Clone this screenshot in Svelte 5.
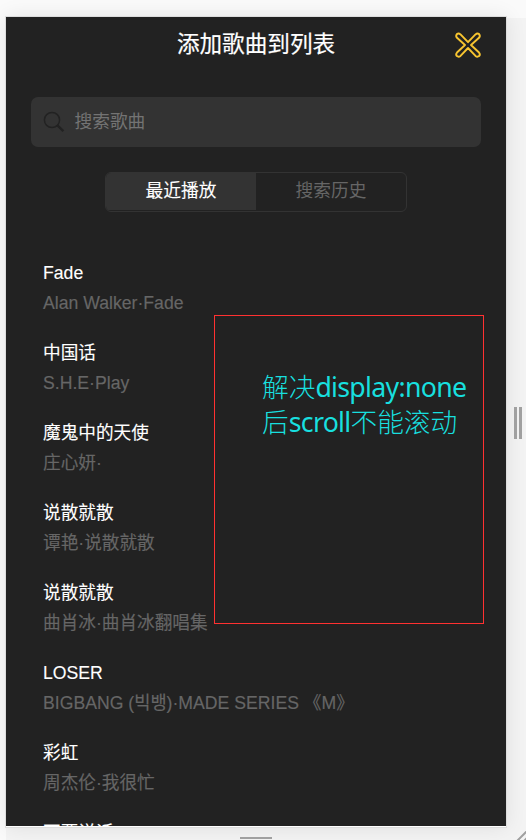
<script>
  const songs = [
    { name: 'Fade', desc: 'Alan Walker·Fade' },
    { name: '中国话', desc: 'S.H.E·Play' },
    { name: '魔鬼中的天使', desc: '庄心妍·' },
    { name: '说散就散', desc: '谭艳·说散就散' },
    { name: '说散就散', desc: '曲肖冰·曲肖冰翻唱集' },
    { name: 'LOSER', desc: 'BIGBANG (빅뱅)·MADE SERIES 《M》' },
    { name: '彩虹', desc: '周杰伦·我很忙' },
    { name: '不要说话' }
  ];
  const tabs = ['最近播放', '搜索历史'];
  let active = $state(0);
</script>

<div class="stage">
  <main class="phone">
    <header>
      <h1>添加歌曲到列表</h1>
      <button class="close" aria-label="close">
        <svg width="28" height="28" viewBox="0 0 28 28">
          <path
            d="M14 11.2 L21.5 3.4 Q23.3 1.9 25.1 3.1 Q26.6 4.9 25 6.8 L17 14 L25 21.5 Q26.6 23.4 25.1 25.1 Q23.3 26.4 21.5 24.9 L14 17 L6.5 24.9 Q4.6 26.4 2.9 25.1 Q1.4 23.4 3 21.5 L11 14 L3 6.8 Q1.4 4.9 2.9 3.1 Q4.6 1.9 6.5 3.4 Z"
          />
        </svg>
      </button>
    </header>

    <div class="search">
      <svg width="22" height="22" viewBox="0 0 22 22">
        <circle cx="9" cy="9" r="7.6" />
        <path d="M14.2 14.2 L20.4 20.2" />
      </svg>
      <span>搜索歌曲</span>
    </div>

    <div class="tabs">
      {#each tabs as tab, i}
        <button class:active={active === i} onclick={() => (active = i)}>{tab}</button>
      {/each}
    </div>

    <ul>
      {#each songs as song}
        <li>
          <h2>{song.name}</h2>
          {#if song.desc}<p>{song.desc}</p>{/if}
        </li>
      {/each}
    </ul>
  </main>

  <div class="note">
    <div><span>解决</span>display:none</div>
    <div><span>后</span>scroll<span>不能滚动</span></div>
  </div>

  <div class="grip-right"></div>
  <div class="grip-bottom"></div>
  <svg class="grip-corner" width="12" height="10" viewBox="0 0 12 10">
    <path d="M1 11 L12 0 M8 11 L13 6" />
  </svg>
</div>

<style>
  :global(body) {
    background: #f3f3f3;
    overflow: hidden;
  }
  .stage {
    position: relative;
    box-sizing: border-box;
    width: 526px;
    height: 840px;
    padding: 17px 20px 13px 6px;
    overflow: hidden;
    background: linear-gradient(#fafafa, #fafafa) 0 0 / 526px 18px no-repeat, linear-gradient(#fafafa, #fafafa) 0 0 / 6px 840px no-repeat, #f3f3f3;
    font-family: "Liberation Sans", "Noto Sans CJK SC", "Noto Sans CJK KR", sans-serif;
  }
  .phone {
    width: 500px;
    height: 809px;
    overflow: hidden;
    background: #222;
    border-bottom: 1px solid #fff;
    box-shadow: 0 0 0 1px #ddd, 0 0 20px rgba(0, 0, 0, 0.09);
  }
  button {
    border: 0;
    padding: 0;
    background: none;
    font: inherit;
  }
  header {
    display: grid;
    grid-template-columns: 76px 1fr 76px;
    align-items: center;
    height: 55px;
  }
  h1 {
    grid-column: 2;
    margin: 0;
    color: #fff;
    font-size: 22.6px;
    font-weight: 400;
    line-height: 55px;
    text-align: center;
    white-space: nowrap;
    -webkit-text-stroke: 0.2px #fff;
  }
  .close {
    display: flex;
    justify-self: start;
    margin-left: 24px;
  }
  .close path {
    fill: none;
    stroke: #f8c530;
    stroke-width: 1.9;
    stroke-linejoin: round;
  }
  .search {
    display: flex;
    align-items: center;
    gap: 10px;
    box-sizing: border-box;
    width: 450px;
    height: 50px;
    margin: 25px 0 0 25px;
    padding: 0 0 0 11.5px;
    border-radius: 7px;
    background: #333;
    color: #737373;
    font-size: 17.7px;
  }
  .search span {
    line-height: 24px;
  }
  .search svg {
    fill: none;
    stroke: #222;
    stroke-width: 1.5;
  }
  .search path {
    stroke-width: 2.4;
  }
  .tabs {
    display: flex;
    box-sizing: border-box;
    width: 302px;
    height: 40px;
    margin: 25px 0 0 99px;
    border: 1px solid #333;
    border-radius: 6px;
    overflow: hidden;
  }
  .tabs button {
    flex: 1;
    height: 37px;
    color: #666;
    font-size: 17.7px;
    line-height: 37px;
  }
  .tabs button.active {
    background: #333;
    color: #fff;
    -webkit-text-stroke: 0.1px #fff;
  }
  ul {
    margin: 0;
    padding: 46px 37px 0;
    list-style: none;
  }
  li {
    height: 80px;
  }
  h2,
  p {
    margin: 0;
    height: 30px;
    font-size: 17.65px;
    font-weight: 400;
    line-height: 30px;
    white-space: nowrap;
  }
  h2 {
    color: #fff;
    -webkit-text-stroke: 0.12px #fff;
  }
  p {
    color: #666;
    -webkit-text-stroke: 0.15px #666;
  }
  .note {
    position: absolute;
    left: 214px;
    top: 315px;
    box-sizing: border-box;
    width: 270px;
    height: 309px;
    padding: 53px 0 0 47px;
    border: 1px solid #ff3131;
    color: #18dfdf;
    font: 26.7px/34px "Noto Sans", "Noto Sans CJK SC", sans-serif;
    letter-spacing: -0.7px;
    white-space: nowrap;
  }
  .note span {
    font-family: "Noto Sans CJK SC", sans-serif;
    font-weight: 300;
    letter-spacing: 0;
  }
  .grip-right {
    position: absolute;
    left: 514px;
    top: 407px;
    width: 2px;
    height: 32px;
    border: solid #a0a0a0;
    border-width: 0 3px;
  }
  .grip-bottom {
    position: absolute;
    left: 240px;
    top: 837px;
    width: 32px;
    height: 2px;
    background: #a0a0a0;
  }
  .grip-corner {
    position: absolute;
    left: 515px;
    top: 831px;
    fill: none;
    stroke: #a0a0a0;
    stroke-width: 2;
  }
</style>
